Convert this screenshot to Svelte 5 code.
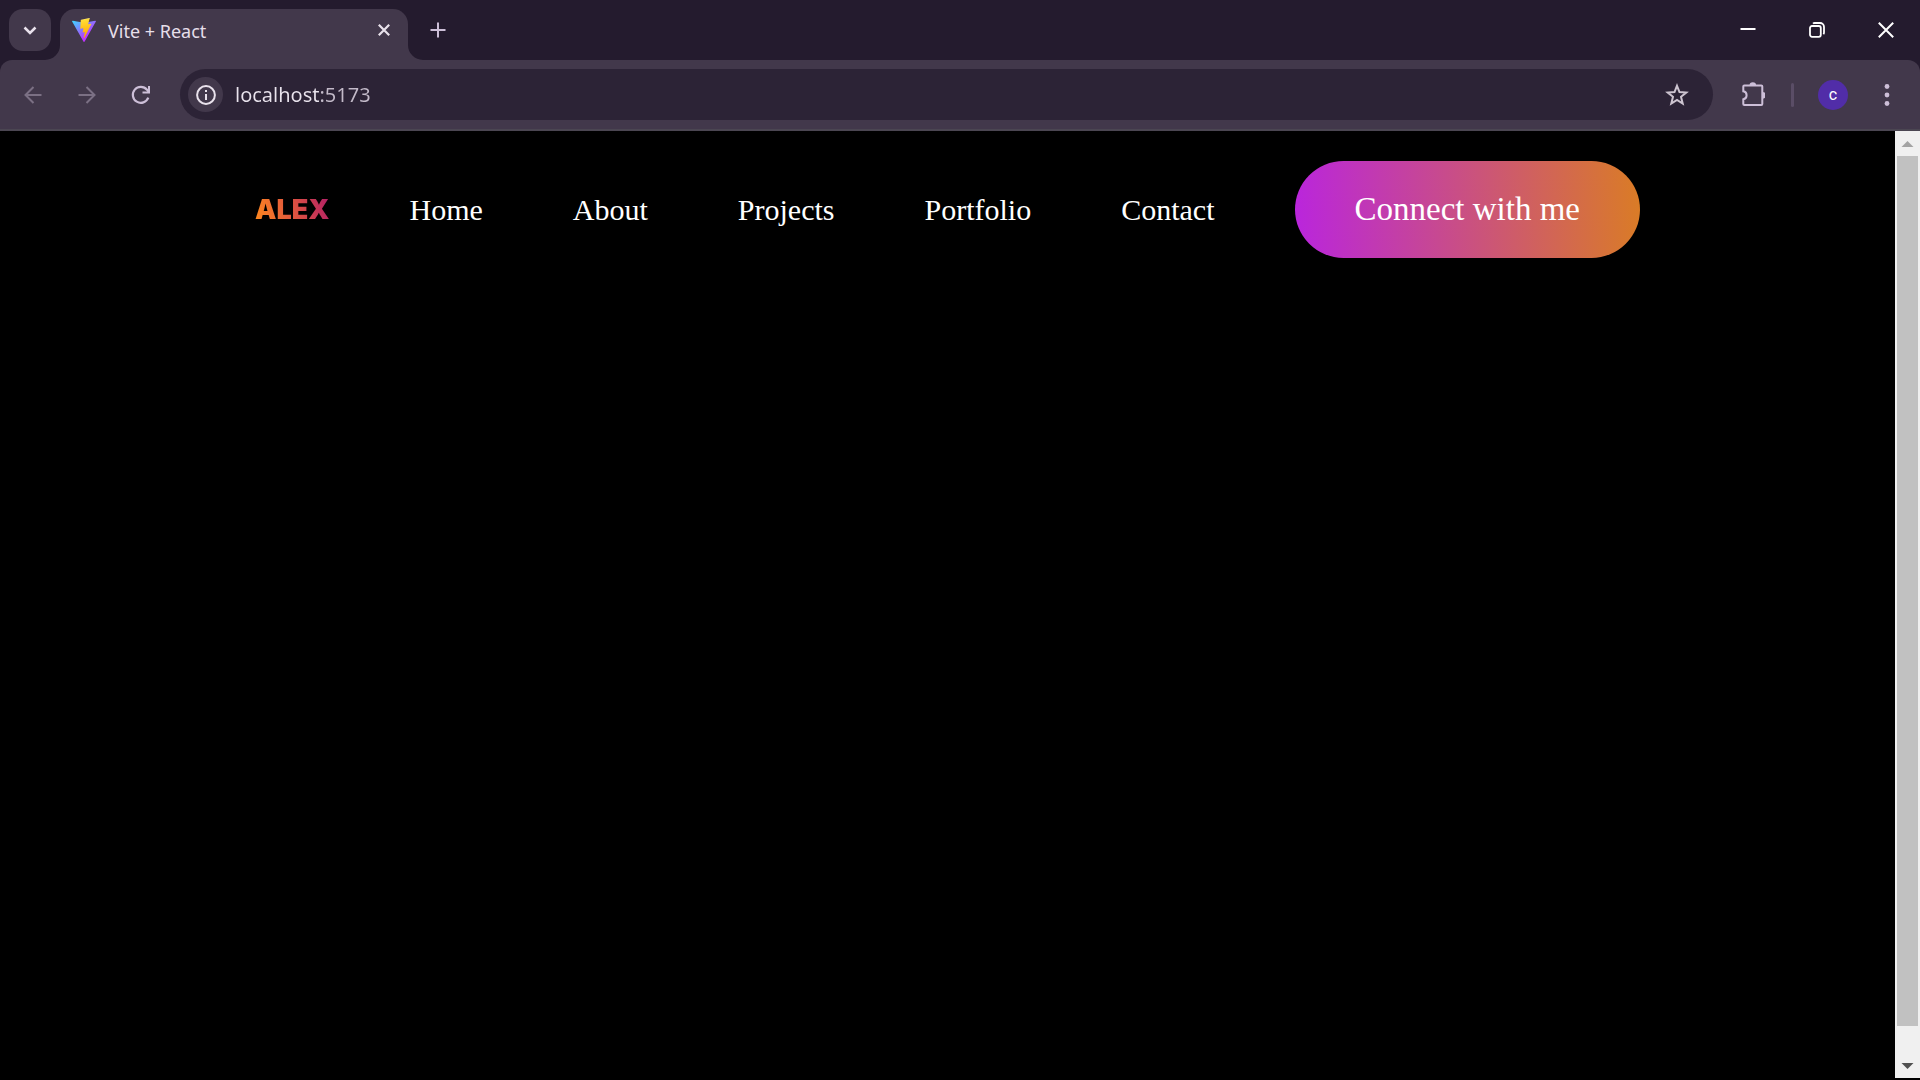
<script>
  let address = $state('localhost:5173');
  const links = ['Home', 'About', 'Projects', 'Portfolio', 'Contact'];
</script>

<div class="window">
  <header class="chrome">
    <div class="strip">
      <button class="search-tabs" aria-label="Search tabs">
        <svg width="14" height="9" viewBox="0 0 14 9"><path d="M1.5 1.5 7 7l5.500-5.500" fill="none" stroke="#e9e2ec" stroke-width="2.500" /></svg>
      </button>
      <div class="tab">
        <svg class="flare left" width="15" height="15" viewBox="0 0 15 15"><path d="M15 0v15H0A15 15 0 0 0 15 0Z" fill="#42384b" /></svg>
        <svg width="24" height="24" viewBox="0 0 256 257">
          <defs>
            <linearGradient id="vite-body" x1="-.828%" y1="7.652%" x2="57.636%" y2="78.411%"><stop offset="0" stop-color="#41D1FF" /><stop offset="1" stop-color="#BD34FE" /></linearGradient>
            <linearGradient id="vite-bolt" x1="43.376%" y1="2.242%" x2="50.316%" y2="89.03%"><stop offset="0" stop-color="#FFEA83" /><stop offset=".083" stop-color="#FFDD35" /><stop offset="1" stop-color="#FFA800" /></linearGradient>
          </defs>
          <path fill="url(#vite-body)" d="M255.153 37.938L134.897 252.976c-2.483 4.44-8.862 4.466-11.382.048L.875 37.958c-2.746-4.814 1.371-10.646 6.827-9.67l120.385 21.517a6.537 6.537 0 0 0 2.322-.004l117.867-21.483c5.438-.991 9.574 4.796 6.877 9.62Z" />
          <path fill="url(#vite-bolt)" d="M185.432.063L96.44 17.501a3.268 3.268 0 0 0-2.634 3.014l-5.474 92.456a3.268 3.268 0 0 0 3.997 3.378l24.777-5.718c2.318-.535 4.413 1.507 3.936 3.838l-7.361 36.047c-.495 2.426 1.782 4.5 4.151 3.78l15.304-4.649c2.372-.72 4.652 1.36 4.15 3.788l-11.698 56.621c-.732 3.542 3.979 5.473 5.943 2.437l1.313-2.028l72.516-144.72c1.215-2.423-.88-5.186-3.54-4.672l-25.505 4.922c-2.396.462-4.435-1.77-3.759-4.114l16.646-57.705c.677-2.35-1.37-4.583-3.769-4.113Z" />
        </svg>
        <span class="title">Vite + React</span>
        <button class="close" aria-label="Close tab">
          <svg width="12" height="12" viewBox="0 0 12 12"><path d="m.8.800 10.400 10.400M11.200.800.800 11.200" stroke="#e9e2ec" stroke-width="2.200" /></svg>
        </button>
        <svg class="flare right" width="15" height="15" viewBox="0 0 15 15"><path d="M0 0v15h15A15 15 0 0 1 0 0Z" fill="#42384b" /></svg>
      </div>
      <button class="new-tab" aria-label="New tab">
        <svg width="16" height="16" viewBox="0 0 16 16"><path d="M8 .5v15M.5 8h15" stroke="#cdbfd8" stroke-width="2" /></svg>
      </button>
      <div class="controls">
        <button aria-label="Minimize"><svg width="16" height="16" viewBox="0 0 16 16"><path d="M.5 7h15" stroke="#fff" stroke-width="2" /></svg></button>
        <button aria-label="Restore"><svg width="16" height="16" viewBox="0 0 16 16"><g fill="none" stroke="#fff" stroke-width="1.800"><rect x="1" y="4" width="10.800" height="10.800" rx="2" /><path d="M4 1.600C4.500 1.100 5 1 5.600 1H11a4 4 0 0 1 4 4v5.400c0 .8-.2 1.400-.6 1.900" /></g></svg></button>
        <button aria-label="Close window"><svg width="16" height="16" viewBox="0 0 16 16"><path d="m.8.800 14.400 14.400M15.200.800.800 15.200" stroke="#fff" stroke-width="2" /></svg></button>
      </div>
    </div>

    <div class="toolbar">
      <nav class="history" aria-label="History">
        <button aria-label="Back"><svg width="18" height="18" viewBox="0 0 18 18"><path d="M17.500 9H2M9.500 1 1.500 9l8 8" fill="none" stroke="#7b7084" stroke-width="2" /></svg></button>
        <button aria-label="Forward"><svg width="18" height="18" viewBox="0 0 18 18"><path d="M.5 9H16M8.500 1l8 8-8 8" fill="none" stroke="#7b7084" stroke-width="2" /></svg></button>
        <button aria-label="Reload"><svg width="20" height="20" viewBox="0 0 20 20"><path d="M17.300 12.700A8 8 0 1 1 16 4.700l1.600 2.200" fill="none" stroke="#cdbfd8" stroke-width="2.200" /><path d="M19 1v7.500h-7.500v-2H17V1Z" fill="#cdbfd8" /></svg></button>
      </nav>
      <div class="omnibox">
        <button class="info" aria-label="View site information">
          <svg width="20" height="20" viewBox="0 0 20 20"><circle cx="10" cy="10" r="8.900" fill="none" stroke="#e9e2ec" stroke-width="2" /><path d="M9 9h2v6H9ZM9 5h2v2H9Z" fill="#e9e2ec" /></svg>
        </button>
        <input type="text" aria-label="Address" bind:value={address} spellcheck="false" />
        <button class="star" aria-label="Bookmark this tab">
          <svg width="24" height="24" viewBox="0 0 24 24"><path d="m12 2.800 2.500 6.300 6.800.5-5.300 4.200 1.700 6.700L12 16.900l-5.700 3.600L8 13.800 2.700 9.600l6.800-.5Z" fill="none" stroke="#cdc4d0" stroke-width="2" /></svg>
        </button>
      </div>
      <button aria-label="Extensions">
        <svg width="26" height="26" viewBox="-1 1 26 26"><path d="M4.300 4.500h17q1 0 1 1v17.500q0 1-1 1h-17q-1 0-1-1v-4.700q3.300-.5 3.300-4T3.300 10.300V5.500q0-1 1-1Z" fill="none" stroke="#cdbfd8" stroke-width="2" /><path d="M9.500 4.500a3.300 3.300 0 0 1 6.600 0ZM22.500 11a3.200 3.200 0 0 1 0 6.600Z" fill="#cdbfd8" /></svg>
      </button>
      <span class="divider"></span>
      <button aria-label="Profile"><span class="avatar">c</span></button>
      <div class="last">
        <button aria-label="Menu"><svg width="6" height="22" viewBox="0 0 6 22"><g fill="#cdbfd8"><circle cx="3" cy="2.500" r="2.400" /><circle cx="3" cy="11" r="2.400" /><circle cx="3" cy="19.500" r="2.400" /></g></svg></button>
      </div>
    </div>
  </header>

  <div class="viewport">
    <main class="page">
      <div class="navbar">
        <a class="logo" href="#home">ALEX</a>
        <nav aria-label="Main">
          <ul>
            {#each links as link}
              <li><a href="#{link.toLowerCase()}">{link}</a></li>
            {/each}
          </ul>
        </nav>
        <button class="connect">Connect with me</button>
      </div>
    </main>
    <div class="scrollbar" aria-hidden="true">
      <svg width="25" height="25" viewBox="0 0 25 25"><path d="m6.500 16 6-6 6 6Z" fill="#a3a3a3" /></svg>
      <div class="track"><div class="thumb"></div></div>
      <svg width="25" height="25" viewBox="0 0 25 25"><path d="m6.500 10 6 6 6-6Z" fill="#505050" /></svg>
    </div>
  </div>
</div>

<style>
  :global(body) {
    margin: 0;
    background: #000;
  }
  .window {
    display: flex;
    flex-direction: column;
    height: 100vh;
    font-family: 'Noto Sans', 'Open Sans', sans-serif;
  }
  button {
    display: flex;
    align-items: center;
    justify-content: center;
    flex: none;
    width: 42px;
    height: 42px;
    padding: 0;
    border: 0;
    background: none;
    font-family: inherit;
    cursor: pointer;
  }
  svg {
    display: block;
    flex: none;
  }
  .chrome {
    background: #241b2e;
  }
  .strip {
    display: flex;
    align-items: flex-end;
    height: 60px;
  }
  .search-tabs {
    margin: 0 9px;
    align-self: center;
    border-radius: 14px;
    background: #42384b;
  }
  .tab {
    position: relative;
    display: flex;
    align-items: center;
    gap: 12px;
    box-sizing: border-box;
    width: 348px;
    height: 51px;
    padding: 0 12px 9px;
    border-radius: 15px 15px 0 0;
    background: #42384b;
  }
  .flare {
    position: absolute;
    bottom: 0;
  }
  .left {
    right: 100%;
  }
  .right {
    left: 100%;
  }
  .title {
    flex: 1;
    padding-top: 2px;
    color: #e6dfea;
    font-size: 18px;
    line-height: 24px;
  }
  .close {
    width: 24px;
    height: 24px;
  }
  .new-tab {
    margin-left: 9px;
    align-self: center;
  }
  .controls {
    display: flex;
    align-self: center;
    margin-left: auto;
  }
  .controls button {
    width: 69px;
  }
  .toolbar {
    display: flex;
    align-items: center;
    gap: 18px;
    height: 69px;
    padding: 0 12px;
    border-bottom: 2px solid #4b4652;
    border-radius: 12px 12px 0 0;
    background: #42384b;
  }
  .history {
    display: flex;
    gap: 12px;
  }
  .omnibox {
    display: flex;
    flex: 1;
    align-items: center;
    gap: 12px;
    height: 51px;
    padding: 0 15px 0 8px;
    border-radius: 26px;
    background: #2c2336;
  }
  .info {
    width: 35px;
    height: 35px;
    border-radius: 50%;
    background: #42384b;
  }
  input {
    flex: 1;
    min-width: 0;
    padding: 0;
    border: 0;
    outline: 0;
    background: linear-gradient(90deg, #e9e3ed 84px, #c3bac9 84px);
    background-clip: text;
    color: transparent;
    font: 20px/28px 'Noto Sans', 'Open Sans', sans-serif;
  }
  .divider {
    width: 3px;
    height: 24px;
    border-radius: 2px;
    background: #5a4d66;
  }
  .avatar {
    width: 30px;
    height: 30px;
    border-radius: 50%;
    background: #512da8;
    color: #fff;
    font: 16px/30px Roboto, sans-serif;
    text-align: center;
  }
  .last {
    margin-left: -6px;
  }
  .viewport {
    display: flex;
    flex: 1;
    min-height: 0;
    padding-bottom: 2px;
    background: #000;
  }
  .page {
    flex: 1;
    font-family: 'Liberation Serif', 'Times New Roman', serif;
  }
  .navbar {
    display: flex;
    align-items: center;
    justify-content: space-between;
    padding: 30px 255px;
  }
  .logo {
    background: linear-gradient(75deg, #ff8a1c, #e0553f 50%, #b01c68);
    background-clip: text;
    color: transparent;
    font: 900 27px/36px Inter, sans-serif;
    text-decoration: none;
  }
  ul {
    display: flex;
    gap: 90px;
    margin: 0;
    padding: 0;
    list-style: none;
  }
  li a {
    color: #fff;
    font-size: 30px;
    line-height: 34px;
    text-decoration: none;
  }
  .connect {
    width: auto;
    height: auto;
    padding: 30px 60px;
    border-radius: 75px;
    background: linear-gradient(267deg, #da7c25 0%, #b923e1 102%);
    color: #fff;
    font-size: 33px;
    line-height: 37px;
  }
  .scrollbar {
    display: flex;
    flex-direction: column;
    width: 25px;
    background: #f0f0f0;
  }
  .track {
    flex: 1;
    padding: 0 2px;
  }
  .thumb {
    height: 97%;
    background: #c1c1c1;
  }
</style>
